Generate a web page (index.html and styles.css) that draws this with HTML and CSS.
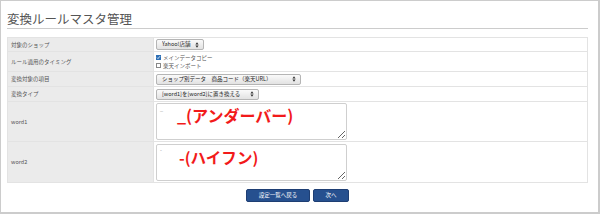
FILE: index.html
```html
<html>
  <head>
    <title>変換ルールマスタ管理</title>
    <link rel="stylesheet" href="styles.css">
  </head>
  <body>
    <div id="frame">
      <h1 class="page_title">変換ルールマスタ管理</h1>
      <table class="form_table">
        <tr class="row_shop">
          <th>対象のショップ</th>
          <td>
            <span class="select_wrap sel_shop">
              <select><option>Yahoo!店舗</option></select>
              <svg class="arrows" width="4" height="6" viewBox="0 0 4 6"><path d="M2 0.3L3.6 2.4H0.4Z M2 5.7L3.6 3.6H0.4Z" fill="#333"/></svg>
            </span>
          </td>
        </tr>
        <tr class="row_timing">
          <th>ルール適用のタイミング</th>
          <td>
            <label class="check"><span class="box checked"><svg width="5" height="5" viewBox="0 0 5 5"><path d="M1 2.6L2 3.6L4 1.2" stroke="#fff" stroke-width="0.8" fill="none"/></svg></span>メインデータコピー</label>
            <label class="check"><span class="box"></span>楽天インポート</label>
          </td>
        </tr>
        <tr class="row_item">
          <th>変換対象の項目</th>
          <td>
            <span class="select_wrap sel_item">
              <select><option>ショップ別データ　商品コード（楽天URL）</option></select>
              <svg class="arrows" width="4" height="6" viewBox="0 0 4 6"><path d="M2 0.3L3.6 2.4H0.4Z M2 5.7L3.6 3.6H0.4Z" fill="#333"/></svg>
            </span>
          </td>
        </tr>
        <tr class="row_type">
          <th>変換タイプ</th>
          <td>
            <span class="select_wrap sel_type">
              <select><option>[word1]を[word2]に置き換える</option></select>
              <svg class="arrows" width="4" height="6" viewBox="0 0 4 6"><path d="M2 0.3L3.6 2.4H0.4Z M2 5.7L3.6 3.6H0.4Z" fill="#333"/></svg>
            </span>
          </td>
        </tr>
        <tr class="row_word">
          <th>word1</th>
          <td>
            <span class="area_wrap">
              <textarea>_</textarea>
              <span class="note note_under">_(アンダーバー)</span>
            </span>
          </td>
        </tr>
        <tr class="row_word2">
          <th>word2</th>
          <td>
            <span class="area_wrap">
              <textarea>-</textarea>
              <span class="note note_hyphen">-(ハイフン)</span>
            </span>
          </td>
        </tr>
      </table>
      <div class="buttons">
        <button class="btn btn_back">設定一覧へ戻る</button>
        <button class="btn btn_next">次へ</button>
      </div>
    </div>
  </body>
</html>
```

FILE: styles.css
```css
html, body {
  margin: 0px;
  padding: 0px;
  background-color: #FFF;
}
#frame {
  box-sizing: border-box;
  width: 600px;
  height: 214px;
  border-left: 1px solid #CCC;
  border-top: 1px solid #CCC;
  border-right: 2px solid #CCC;
  border-bottom: 2px solid #CCC;
  padding: 0px 10px 0px 6px;
  font-family: "Noto Sans CJK JP", "Liberation Sans", sans-serif;
}
.page_title {
  margin: 0px;
  padding: 10px 0px 2px 0px;
  font-size: 12.5px;
  line-height: 15px;
  font-weight: normal;
  color: #555;
  border-bottom: 1px solid #CCC;
}
.form_table {
  width: 581px;
  margin-top: 8px;
  border-collapse: collapse;
  font-size: 5.5px;
  color: #555;
}
.form_table th,
.form_table td {
  border: 1px solid #E3E3E3;
  padding: 0px;
  vertical-align: middle;
}
.form_table th {
  width: 142px;
  padding-left: 3px;
  background-color: #EBEBEB;
  font-weight: normal;
  text-align: left;
}
.form_table td {
  padding-left: 2px;
  background-color: #FFF;
}
.row_shop th { height: 14px; }
.row_timing th { height: 20px; }
.row_item th { height: 15px; }
.row_type th { height: 15px; }
.row_word th { height: 40px; }
.row_word2 th { height: 41px; }
.select_wrap {
  position: relative;
  display: inline-block;
  vertical-align: middle;
}
.select_wrap select {
  appearance: none;
  -webkit-appearance: none;
  box-sizing: border-box;
  height: 11px;
  margin: 0px;
  padding: 0px 0px 0px 5px;
  border: 1px solid #B5B5B5;
  border-radius: 2px;
  background: linear-gradient(#FAFAFA, #E2E2E2);
  font-family: "Noto Sans CJK JP", "Liberation Sans", sans-serif;
  font-size: 5.5px;
  line-height: 9px;
  color: #222;
  display: block;
}
.sel_shop select { width: 48px; }
.sel_item select { width: 145px; }
.sel_type select { width: 103px; }
.arrows {
  position: absolute;
  right: 5px;
  top: 2.5px;
}
.check {
  display: block;
  line-height: 8px;
  color: #555;
}
.box {
  display: inline-block;
  box-sizing: border-box;
  width: 5px;
  height: 5px;
  margin-right: 2px;
  border: 0.6px solid #888;
  background-color: #FFF;
  vertical-align: -0.5px;
}
.box svg {
  display: block;
  margin: -0.6px;
}
.box.checked {
  background-color: #2D6FB5;
  border-color: #2D6FB5;
}
.area_wrap {
  position: relative;
  display: inline-block;
  vertical-align: middle;
}
.area_wrap textarea {
  display: block;
  box-sizing: border-box;
  width: 191px;
  height: 37px;
  margin: 0px;
  padding: 1px 3px;
  border: 1px solid #CFCFCF;
  border-radius: 2px;
  font-family: "Noto Sans CJK JP", "Liberation Sans", sans-serif;
  font-size: 5.5px;
  color: #999;
}
.note {
  position: absolute;
  left: 21px;
  top: 1px;
  font-size: 16px;
  line-height: 22px;
  font-weight: bold;
  color: #F21A1A;
  white-space: nowrap;
  pointer-events: none;
}
.note_hyphen {
  left: 23px;
  top: 2px;
  font-size: 15.5px;
}
.buttons {
  display: flex;
  justify-content: center;
  gap: 3px;
  margin-top: 6px;
}
.btn {
  box-sizing: border-box;
  height: 13px;
  padding: 0px;
  border: 1px solid #1E3E73;
  border-radius: 2px;
  background-color: #26508F;
  color: #FFF;
  font-family: "Noto Sans CJK JP", "Liberation Sans", sans-serif;
  font-size: 5.5px;
  line-height: 11px;
}
.btn_back { width: 64px; }
.btn_next { width: 36px; }
```
